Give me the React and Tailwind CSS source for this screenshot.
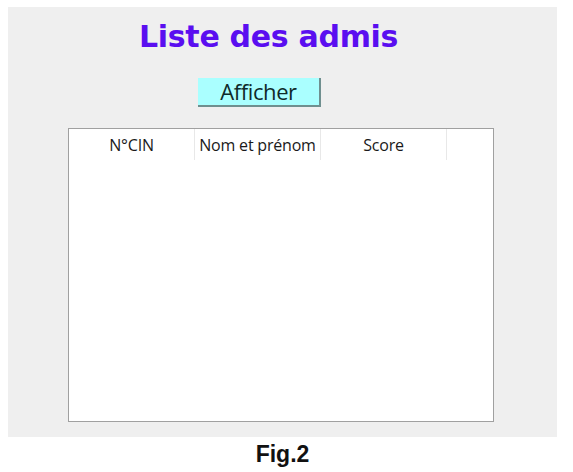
import React from 'react'

const App = () => {
    const cols = ['N°CIN', 'Nom et prénom', 'Score']

    return (
        <div className='w-[573px] h-[472px] bg-white pt-[7px] pl-[8px]'>
            <div className='w-[549px] h-[430px] bg-[#efefef] flex flex-col'>
                <h1 className="h-[58px] pt-[11px] pl-[131px] text-[30px] leading-[37px] font-bold text-[#5a0ef0] font-['DejaVu_Sans',sans-serif] tracking-[-0.3px]">
                    Liste des admis
                </h1>
                <div className='pl-[190px] pt-[13px]'>
                    <button className="w-[123px] h-[29px] bg-[#aaffff] border-r-2 border-b-2 border-[#6f8f8f] text-[22px] leading-[27px] text-[#0f2a2a] font-['Open_Sans',sans-serif] tracking-[-0.4px]">
                        Afficher
                    </button>
                </div>
                <div className='ml-[60px] mt-[21px] w-[426px] h-[294px] bg-white border border-[#a0a0a0]'>
                    <div className='flex h-[31px]'>
                        {cols.map((c) => (
                            <div key={c} className="w-[126px] border-r border-[#e8e8e8] flex items-center justify-center text-[16px] text-[#1a1a1a] font-['Open_Sans',sans-serif] tracking-[-0.2px]">
                                {c}
                            </div>
                        ))}
                    </div>
                </div>
            </div>
            <div className="w-[549px] pt-[3px] text-center text-[23px] leading-[28px] font-bold text-[#111] font-['Liberation_Sans',sans-serif]">
                Fig.2
            </div>
        </div>
    )
}

export default App
